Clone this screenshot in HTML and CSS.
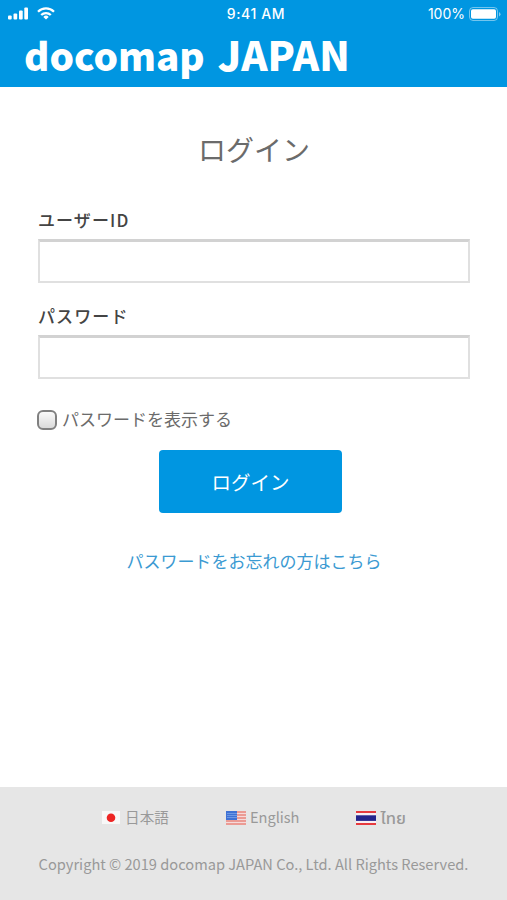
FILE: index.html
```html
<!DOCTYPE html>
<html lang="ja">
<head>
<meta charset="UTF-8">
<meta name="viewport" content="width=device-width, initial-scale=1.0">
<title>ログイン - docomap JAPAN</title>
<link rel="stylesheet" href="styles.css">
</head>
<body>

<header class="header">
    <div class="status-bar">
        <div class="status-left">
            <svg class="signal" width="20" height="13" viewBox="0 0 20 13" fill="#fff">
                <rect x="0" y="8.5" width="3.7" height="4" rx="1"/>
                <rect x="5.5" y="6.5" width="3.7" height="6" rx="1"/>
                <rect x="11" y="3.5" width="3.7" height="9" rx="1"/>
                <rect x="16.3" y="0.5" width="3.7" height="12" rx="1"/>
            </svg>
            <svg class="wifi" width="18" height="13" viewBox="0 0 18 13" fill="none" stroke="#fff" stroke-width="2.3">
                <path d="M1 4.7a11.4 11.4 0 0 1 16 0"/>
                <path d="M4.2 8a6.9 6.9 0 0 1 9.6 0"/>
                <path d="M9 12.6L6.3 9.9a3.9 3.9 0 0 1 5.4 0z" fill="#fff" stroke="none"/>
            </svg>
        </div>
        <div class="time">9:41 AM</div>
        <div class="status-right">
            <span>100%</span>
            <svg width="32" height="14" viewBox="0 0 32 14">
                <rect x="0.5" y="0.5" width="28" height="13" rx="3.5" fill="none" stroke="#fff" stroke-opacity="0.45"/>
                <rect x="2" y="2.3" width="25" height="9.4" rx="1.8" fill="#fff"/>
                <path d="M30 5v4.4q1.5-.7 1.5-2.2T30 5z" fill="#fff" fill-opacity="0.5"/>
            </svg>
        </div>
    </div>
    <div class="logo"><span>docomap</span><span class="logo-country">JAPAN</span></div>
</header>

<main class="login">
    <h1>ログイン</h1>
    <form>
        <label class="field-label" for="user">ユーザーID</label>
        <input class="field" type="text" id="user">
        <label class="field-label" for="password">パスワード</label>
        <input class="field" type="password" id="password">
        <label class="show-password"><input type="checkbox" id="showPassword">パスワードを表示する</label>
        <button class="btn-login" type="submit">ログイン</button>
    </form>
    <a class="forgot" href="#">パスワードをお忘れの方はこちら</a>
</main>

<footer class="footer">
    <div class="languages">
        <a href="#">
            <svg width="20" height="14" viewBox="0 0 20 14">
                <rect x="1" width="18" height="13" fill="#f8f8f8"/>
                <circle cx="10" cy="6.7" r="4.3" fill="#ed2524"/>
            </svg>
            <span>日本語</span>
        </a>
        <a href="#">
            <svg width="20" height="14" viewBox="0 0 20 14">
                <rect width="20" height="14" fill="#f6dada"/>
                <path d="M0 1h20M0 4h20M0 7h20M0 10h20M0 13h20" stroke="#e8877e" stroke-width="1.6"/>
                <rect width="11" height="9" fill="#3f72d5"/>
                <path d="M1.5 2.5h9M1.5 4.5h9M1.5 6.5h9" stroke="#a9c7f3" stroke-width="0.9" stroke-dasharray="1 1"/>
            </svg>
            <span>English</span>
        </a>
        <a href="#">
            <svg width="20" height="14" viewBox="0 0 20 14">
                <rect width="20" height="14" fill="#e63a3e"/>
                <rect y="2" width="20" height="10" fill="#f8eef3"/>
                <rect y="4.3" width="20" height="5.6" fill="#24248c"/>
            </svg>
            <span class="thai">ไทย</span>
        </a>
    </div>
    <p class="copyright">Copyright © 2019 docomap JAPAN Co., Ltd. All Rights Reserved.</p>
</footer>

</body>
</html>
```
FILE: styles.css
```css
* {
    box-sizing: border-box;
}

body {
    margin: 0;
    height: 900px;
    display: flex;
    flex-direction: column;
    font-family: "Noto Sans CJK JP", sans-serif;
    font-size: 17px;
    color: #6b6b6b;
    background-color: #fff;
    overflow: hidden;
}

a {
    text-decoration: none;
}

.header {
    height: 86.5px;
    background-color: #0096e1;
    color: #fff;
}

.status-bar {
    display: grid;
    grid-template-columns: 1fr auto 1fr;
    align-items: center;
    height: 27px;
    padding: 0 6px 0 8px;
    font-family: Inter, sans-serif;
    font-size: 14px;
}

.status-left,
.status-right {
    display: flex;
    align-items: center;
}

.status-left {
    gap: 9px;
}

.status-right {
    justify-content: flex-end;
    gap: 4px;
}

.time {
    padding-left: 3px;
    font-weight: 500;
    letter-spacing: 0.6px;
}

.logo {
    display: flex;
    align-items: baseline;
    gap: 13px;
    padding-left: 24px;
    font-size: 38.6px;
    font-weight: 900;
    line-height: 55px;
    white-space: nowrap;
}

.logo-country {
    font-size: 40px;
}

.login {
    flex: 1;
    padding: 42px 37px 0 38px;
    text-align: center;
}

h1 {
    margin: 0 0 38px;
    font-size: 28px;
    font-weight: 400;
    line-height: 40px;
}

form {
    display: flex;
    flex-direction: column;
    align-items: flex-start;
}

.field-label {
    color: #444;
    font-weight: 500;
    letter-spacing: 1.1px;
    line-height: 25px;
    margin-bottom: 7px;
}

.field {
    width: 100%;
    height: 44px;
    margin: 0 0 20px;
    padding: 0 10px;
    border: 2px solid #e0e0e0;
    border-top: 3px solid #d2d2d2;
    background-color: #fff;
    font-size: 17px;
}

.show-password {
    display: flex;
    align-items: center;
    gap: 5px;
    margin-top: 9px;
    line-height: 22px;
}

.show-password input {
    appearance: none;
    width: 20px;
    height: 20px;
    margin: 2px 0 0 -1px;
    border: 2px solid #808080;
    border-radius: 6px;
    background: linear-gradient(#fafafa, #dadada);
}

.btn-login {
    align-self: center;
    width: 183px;
    height: 63px;
    margin: 20px 7px 0 0;
    padding: 0;
    border: none;
    border-radius: 4px;
    background-color: #0096e1;
    color: #fff;
    font-family: inherit;
    font-size: 19.5px;
}

.forgot {
    display: block;
    margin-top: 35px;
    line-height: 25px;
    color: #3b9ad2;
}

.footer {
    height: 113px;
    padding-top: 17px;
    background-color: #e6e6e6;
    color: #999;
    text-align: center;
}

.languages {
    display: flex;
    justify-content: center;
    gap: 57px;
    font-size: 14.6px;
    line-height: 26px;
}

.languages a {
    display: flex;
    align-items: center;
    gap: 4px;
    color: #999;
}

.languages svg {
    margin-top: 1px;
}

.thai {
    font-family: "Noto Sans CJK JP", "Noto Sans Thai", "Noto Sans", sans-serif;
    font-size: 16.5px;
    font-weight: 500;
}

.copyright {
    margin: 22px 0 0;
    font-size: 14.63px;
    line-height: 24px;
    white-space: nowrap;
}
```
